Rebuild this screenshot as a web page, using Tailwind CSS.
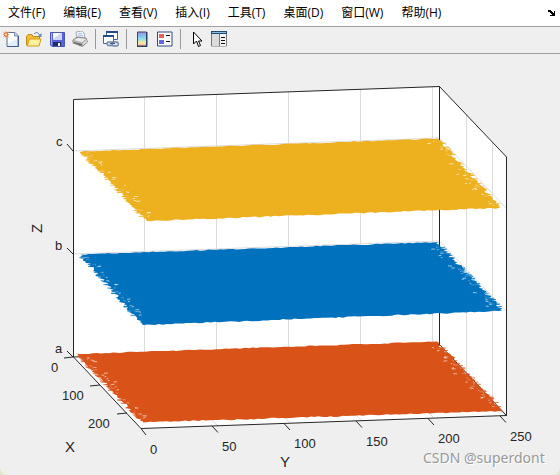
<!DOCTYPE html>
<html lang="zh-CN">
<head>
<meta charset="utf-8">
<title>Figure</title>
<script src="https://cdn.jsdelivr.net/npm/@tailwindcss/browser@4"></script>
</head>
<body class="bg-[#e4e6cc]">
<main class="min-h-screen flex flex-col bg-[#efefef] rounded-b-lg overflow-hidden font-['Open_Sans','Noto_Sans_CJK_SC',sans-serif] text-black">
  <nav class="flex items-center gap-[18px] h-[27px] pl-2 pr-1 bg-white border-b border-[#a0a0a0] text-xs whitespace-nowrap" aria-label="菜单">
    <button>文件(F)</button>
    <button>编辑(E)</button>
    <button>查看(V)</button>
    <button>插入(I)</button>
    <button>工具(T)</button>
    <button>桌面(D)</button>
    <button>窗口(W)</button>
    <button>帮助(H)</button>
    <button class="ml-auto" aria-label="停靠图窗">
      <svg class="w-2 h-2" viewBox="0 0 8 8" shape-rendering="crispEdges"><path d="M0 1h3v1h1v1h1v1h1V2h1v5H2V6h2V5H3V4H2V3H0z"/></svg>
    </button>
  </nav>
  <div class="flex items-center gap-[7px] h-[27px] pl-[3px] pb-[2px] border-b border-[#a0a0a0]" role="toolbar" aria-label="工具栏">
    <button aria-label="新建图窗"><svg class="block size-4" viewBox="0 0 16 16"><path d="M4 1.500h8l3 3v11H4z" fill="#e2eefa" stroke="#61738f"/><path d="M5 2h6v4h3v2L5 12z" fill="#fff"/><path d="M11.500 1.500v3.500H15" fill="#bcd5ef" stroke="#8095b2"/><path d="M15.500 5v10.500H4" fill="none" stroke="#475a91"/><path d="M0 .5l6 6M6 .5l-6 6M3 0v7M0 3.500h6" stroke="#f3a36e"/><circle cx="3" cy="3.500" r="1.700" fill="#fff0b0" stroke="#dc542d"/></svg></button>
    <button aria-label="打开文件"><svg class="block size-4" viewBox="0 0 16 16"><path d="M.5 14V5.500l1.500-2h4l1 2h6.500V14z" fill="#f1bf35" stroke="#c28b17"/><path d="M1 15l2.500-7H15l-2 7z" fill="#fff19a" stroke="#d49c18"/><path d="M8 3c2-2 4-2 5.500 1" fill="none" stroke="#5d799c"/><path d="M15.500 2v4h-4z" fill="#6688ac"/></svg></button>
    <button aria-label="保存图窗"><svg class="block size-4" viewBox="0 0 16 16"><path d="M1.500 1.500h14v14H3l-1.500-1.500z" fill="#5862d5" stroke="#4a55b4"/><path d="M4 2h9v7H4z" fill="#c9d6f8"/><path d="M4 2h8L4 8z" fill="#fff"/><path d="M4 11h8v4H4z" fill="#222c65"/><path d="M9 12h2v3H9z" fill="#fff"/><path d="M2.500 2v12" stroke="#a3adff"/></svg></button>
    <button aria-label="打印图窗"><svg class="block size-4" viewBox="0 0 16 16"><path d="M5 8L4 1l6-1 2 2 1 6z" fill="#f3f8fe" stroke="#a3adbb"/><path d="M6 3l4-.5M6 5l5-.5" stroke="#9fb9dc"/><path d="M1 9l4-3 9 1 1.500 4-5 4.500L1 12z" fill="#b4b4b4" stroke="#8a8a8a"/><path d="M2 9l4-2 8 1-4 3z" fill="#ececec"/><path d="M2 11l8 2v2l-8-3z" fill="#6a6a6a"/><path d="M11 12l4-3v2l-4 3z" fill="#ddd"/></svg></button>
    <span class="w-px h-5 bg-[#999]"></span>
    <button aria-label="链接绘图"><svg class="block size-4" viewBox="0 0 16 16"><path d="M3.500.5h11v8h-11z" fill="#fff" stroke="#49658f"/><path d="M3 0h12v2H3z" fill="#254c86"/><path d="M.5 4.500h10v8H.5z" fill="#fff" stroke="#49658f"/><path d="M0 4h11v2H0z" fill="#254c86"/><g fill="#dce9f4" stroke="#6d85a3" stroke-width="1.300"><rect x="4" y="11" width="7" height="3.500" rx="1.700"/><rect x="9" y="11" width="6.300" height="4" rx="2"/></g><path d="M7 12.500h5" stroke="#3f5878"/></svg></button>
    <span class="w-px h-5 bg-[#999]"></span>
    <button aria-label="插入颜色栏"><svg class="block size-4" viewBox="0 0 16 16"><defs><linearGradient id="cb" x2="0" y2="1"><stop stop-color="#ac8ddb"/><stop offset=".3" stop-color="#7cc4f3"/><stop offset=".55" stop-color="#9ce6d2"/><stop offset=".78" stop-color="#ffe9a0"/><stop offset="1" stop-color="#f2a2a2"/></linearGradient></defs><path d="M3.500 1h9v14h-9z" fill="url(#cb)" stroke="#34486f"/><path d="M13 1v14.500H3" fill="none" stroke="#293c68"/></svg></button>
    <button aria-label="插入图例"><svg class="block size-4" viewBox="0 0 16 16"><path d="M.5 1h14.500v14H.5z" fill="#fff" stroke="#334a7c"/><path d="M2 3h5v4H2z" fill="#e46464"/><path d="M2 9h5v4H2z" fill="#6464e4"/><path d="M9 4.500h4M9 10.500h4" stroke="#111"/></svg></button>
    <span class="w-px h-5 bg-[#999]"></span>
    <button aria-label="编辑绘图"><svg class="block size-4" viewBox="0 0 16 16"><path d="M5.500 1v12l3-3 2 5.500 2-1-2-4.500h3.500z" fill="#fff" stroke="#000"/></svg></button>
    <button aria-label="打开属性检查器"><svg class="block size-4" viewBox="0 0 16 16"><path d="M.5 1h15v14H.5z" fill="#eee" stroke="#777"/><path d="M0 0h16v3H0z" fill="#264a70"/><path d="M1 1h14v1H1z" fill="#82bce9"/><path d="M1 3h7v12H1z" fill="#dcdcdc"/><path d="M8.500 3v12" stroke="#777"/><path d="M9 3h6v12H9z" fill="#f4f4f4"/><path d="M10 6.500h4M10 9.500h4M10 12.500h4" stroke="#111"/></svg></button>
  </div>
  <svg class="block w-full" viewBox="0 54 560 421" role="img" aria-label="三维绘图" font-family="'Liberation Sans',Arial,sans-serif">
    <path d="M73 99.500L439.500 86.500L506.500 157V415.500L141 428.500L73 357z" fill="#fff"/>
    <g stroke="#dcdcdc" fill="none">
      <path d="M144.500 97V355L218 426M216.500 94V352L290 423M288.500 92V350L362 421M360.500 89V347L434 418M432.500 87V345L506 416M466.500 115V373M492.500 142V401"/>
      <path d="M73 151L439.500 138L506 208M73 254L439.500 241L506 311"/>
    </g>
    <g stroke="#262626" fill="none">
      <path d="M73.500 357V99.500L439.500 86.500L506.500 157V415.500L141 428.500L73.500 357L439.500 344.500V86.500M439.500 344.500L506.500 415.500"/>
      <path d="M73 151l-6-7M73 254l-6-6M73 357l-6-6M73 357l-9 1M100 385l-10 1M127 413l-10 1M141 428.500l5 6.500M212 426l6 6.500M284 423.500l6 6.500M356 421l6 6.500M428 418.500l6 6.500M500 416l6 6.500"/>
    </g>
    <g id="planes"></g>
    <g fill="#262626" font-size="13">
      <text x="56" y="146">c</text><text x="55" y="250">b</text><text x="55" y="353">a</text>
      <text x="51" y="372">0</text><text x="62" y="400">100</text><text x="88" y="428">200</text>
      <text x="150" y="454">0</text><text x="222" y="451">50</text><text x="294" y="448">100</text><text x="366" y="446">150</text><text x="438" y="443">200</text><text x="510" y="441">250</text>
    </g>
    <g fill="#262626" font-size="15">
      <text x="65" y="452">X</text><text x="280" y="467">Y</text><text transform="translate(42 233) rotate(-90)">Z</text>
    </g>
    <g font-size="14" font-family="'Noto Sans',sans-serif"><text x="424" y="464" fill="#fff">CSDN @superdont</text><text x="423" y="463" fill="#999">CSDN @superdont</text></g>
  </svg>
</main>
<script>
  // Three noisy surfaces: each is a quad whose slanted sides are frayed by row.
  let seed = 7;
  const rnd = () => (seed = (seed * 16807) % 2147483647) / 2147483647;
  const surfaces = [
    ['#edb120', [81, 151.5], [438, 138.5], [500, 208], [147, 221]],
    ['#0072bd', [80, 254.5], [437, 242], [503, 311], [143, 325]],
    ['#d95319', [77, 354], [436, 341.5], [503, 411], [142, 422.5]]
  ];
  const edge = (p, q, step, jx, jy) => {
    const n = Math.round(Math.hypot(q[0] - p[0], q[1] - p[1]) / step), pts = [];
    for (let i = 0; i < n; i++) {
      const t = i / n;
      pts.push((p[0] + (q[0] - p[0]) * t + (rnd() - .5) * jx).toFixed(1) + ',' + (p[1] + (q[1] - p[1]) * t + (rnd() - .5) * jy).toFixed(1));
    }
    return pts;
  };
  let out = '';
  for (const [color, a, b, c, d] of surfaces) {
    const pts = [...edge(a, b, 4, 2, 1), ...edge(b, c, 1.4, 5, 0), ...edge(c, d, 4, 2, 1.2), ...edge(d, a, 1.4, 5, 0)];
    out += `<polygon points="${pts.join(' ')}" fill="${color}"/>`;
    let gaps = '', hairs = '';
    for (let i = 0; i < 34; i++) {
      for (const [p, q, s] of [[a, d, 1], [b, c, -1]]) {
        const t = .03 + rnd() * .93, x = p[0] + (q[0] - p[0]) * t, y = p[1] + (q[1] - p[1]) * t;
        const len = 1.5 + rnd() * 3, off = rnd() * rnd() * 12 + 1;
        gaps += `M${(x + s * off).toFixed(1)} ${y.toFixed(1)}l${(s * len).toFixed(1)} ${(rnd() - .5).toFixed(1)}`;
        hairs += `M${(x - s * (1 + rnd() * 3)).toFixed(1)} ${y.toFixed(1)}l${s * 8} ${(rnd() - .3).toFixed(1)}`;
      }
    }
    out += `<path d="${gaps}" stroke="#fff" stroke-width=".6"/><path d="${hairs}" stroke="${color}" stroke-width=".8"/>`;
  }
  document.getElementById('planes').innerHTML = out;
</script>
</body>
</html>
